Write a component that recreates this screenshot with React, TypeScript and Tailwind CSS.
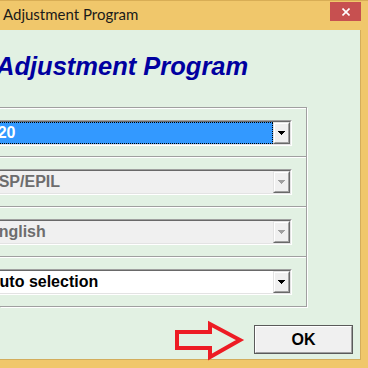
import React from 'react';

const ui = { fontFamily: '"Liberation Sans", Arial, sans-serif' };

function Arrow({ disabled }: { disabled?: boolean }) {
  return (
    <svg width="7" height="4" viewBox="0 0 7 4" shapeRendering="crispEdges">
      <path d="M0 0h7v1H0zM1 1h5v1H1zM2 2h3v1H2zM3 3h1v1H3z" fill={disabled ? '#a0a0a0' : '#000'} />
    </svg>
  );
}

function Combo({
  text,
  variant,
  shift = 0,
}: {
  text: string;
  variant: 'focus' | 'disabled' | 'normal';
  shift?: number;
}) {
  const field =
    variant === 'focus'
      ? 'bg-[#3399ff] text-white border border-dotted border-black'
      : variant === 'disabled'
      ? 'bg-[#f0f0f0] text-[#6d6d6d]'
      : 'bg-white text-black';
  return (
    <div className="flex-1 -ml-[20px] h-[26px] border border-t-[#a0a0a0] border-l-[#a0a0a0] border-b-white border-r-white">
      <div className="flex h-full border border-t-[#696969] border-l-[#696969] border-b-[#e3e3e3] border-r-[#e3e3e3]">
        <div className={`flex-1 flex items-center overflow-hidden pl-[6px] ${field}`}>
          <span className="text-[16px] font-bold leading-[20px] whitespace-nowrap" style={{ marginLeft: shift }}>
            {text}
          </span>
        </div>
        <div className="w-[17px] bg-[#f0f0f0] border border-t-[#e3e3e3] border-l-[#e3e3e3] border-b-[#696969] border-r-[#696969]">
          <div className="h-full flex items-center justify-center border border-t-white border-l-white border-b-[#a0a0a0] border-r-[#a0a0a0]">
            <Arrow disabled={variant === 'disabled'} />
          </div>
        </div>
      </div>
    </div>
  );
}

const rows: { text: string; variant: 'focus' | 'disabled' | 'normal'; h: string; shift?: number }[] = [
  { text: 'L220', variant: 'focus', h: 'h-[49px]', shift: -10 },
  { text: 'ESP/EPIL', variant: 'disabled', h: 'h-[50px]' },
  { text: 'English', variant: 'disabled', h: 'h-[50px]' },
  { text: 'Auto selection', variant: 'normal', h: 'h-[50px]' },
];

export default function App() {
  return (
    <div className="w-[368px] h-[368px] overflow-hidden flex flex-col bg-[#f0c76b] border-t border-[#d8ad55]" style={ui}>
      {/* title bar */}
      <div className="h-[29px] flex items-start justify-between">
        <span
          className="pl-[3px] pt-[3px] text-[15px] leading-[20px] text-[#1a1a1a]"
          style={{ fontFamily: 'Lato, "Noto Sans", sans-serif' }}
        >
          Adjustment Program
        </span>
        <div className="w-[31px] h-[19px] mt-[1px] mr-[7px] bg-[#c75050] flex items-center justify-center">
          <svg width="8" height="8" viewBox="0 0 8 8">
            <path d="M0.5 0.5L7.5 7.5M7.5 0.5L0.5 7.5" stroke="#fff" strokeWidth="1.6" />
          </svg>
        </div>
      </div>

      {/* client area */}
      <div className="relative h-[330px] w-[361px] bg-[#e2f1e3] border-r border-b border-[#d3ad5c]">
        <h1 className="mt-[24px] -ml-[4px] text-[25.5px] leading-[25px] font-bold italic text-[#0000a0] whitespace-nowrap">
          Adjustment Program
        </h1>

        <div className="mt-[28px] w-[307px] border-r border-b border-[#a0a0a0] shadow-[1px_1px_0_#fff]">
          {rows.map((r) => (
            <div
              key={r.text}
              className={`${r.h} flex items-start pt-[12px] pr-[14px] border-t border-[#a0a0a0] shadow-[inset_0_1px_0_#fff]`}
            >
              <Combo text={r.text} variant={r.variant} shift={r.shift} />
            </div>
          ))}
        </div>

        <div className="flex justify-end mt-[18px] mr-[7px]">
          <button className="w-[99px] h-[29px] bg-[#f0f0f0] border border-[#5a5a5a] p-0">
            <div className="h-full flex items-center justify-center border border-t-white border-l-white border-b-[#a0a0a0] border-r-[#a0a0a0] text-[16px] font-bold text-black">
              OK
            </div>
          </button>
        </div>

        {/* red annotation arrow */}
        <svg className="absolute left-[170px] top-[285px]" width="80" height="50" viewBox="0 0 80 50">
          <path
            d="M7 17H40V9L70 25L40 42V33H7Z"
            fill="none"
            stroke="#ed1c24"
            strokeWidth="4"
            strokeLinejoin="miter"
          />
        </svg>
      </div>
    </div>
  );
}
